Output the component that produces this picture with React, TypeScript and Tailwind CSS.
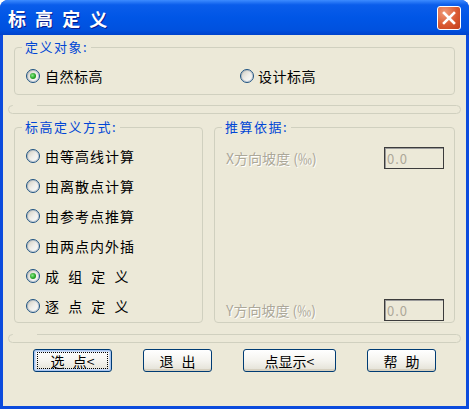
import React from "react";

const cjk = "font-['Noto_Sans_CJK_SC','Noto_Sans',sans-serif]";

function Radio({ checked }: { checked?: boolean }) {
  return (
    <span className="flex h-[14px] w-[14px] shrink-0 items-center justify-center rounded-full border border-[#1C5180] bg-gradient-to-br from-[#CFCBBE] via-[#EEEDE8] to-white shadow-[inset_0_0_0_1px_rgba(120,140,170,0.35)]">
      {checked && (
        <span className="h-[6px] w-[6px] rounded-full bg-[radial-gradient(circle_at_40%_40%,#8BEA8B,#21A121_60%,#148A14)]" />
      )}
    </span>
  );
}

function Option({
  label,
  checked,
  spaced,
}: {
  label: string;
  checked?: boolean;
  spaced?: boolean;
}) {
  return (
    <div className="flex h-[30px] items-center gap-[5px]">
      <Radio checked={checked} />
      <span
        className={
          spaced
            ? "text-[14px] leading-none text-black [word-spacing:6px]"
            : "text-[14px] leading-none tracking-[1px] text-black"
        }
      >
        {label}
      </span>
    </div>
  );
}

function Legend({ text }: { text: string }) {
  return (
    <legend className="ml-[7px] px-[3px] text-[13px] leading-[16px] tracking-[1.5px] text-[#0046D5]">
      {text}
    </legend>
  );
}

function Separator({ className }: { className: string }) {
  return (
    <fieldset className={"h-[9px] rounded-[5px] border border-[#D0D0BF] " + className}>
      <legend className="ml-[4px] h-[1px] w-[24px]" />
    </fieldset>
  );
}

function Slope({ label }: { label: string }) {
  return (
    <div className="flex items-center justify-between">
      <span className="text-[14px] leading-none text-[#ACA899] [text-shadow:1px_1px_0_#ffffff]">
        {label}
      </span>
      <div className="flex h-[22px] w-[60px] items-center border border-[#3C3C3C] bg-[#ECE9D8] pl-[2px] shadow-[inset_1px_1px_0_#9A9A9A]">
        <span className="text-[13px] leading-none tracking-[1px] text-[#ACA899]">0.0</span>
      </div>
    </div>
  );
}

function XpButton({ label, width, focused }: { label: string; width: string; focused?: boolean }) {
  return (
    <button
      className={
        width +
        " flex h-[23px] items-center justify-center rounded-[3px] border border-[#003C74] bg-gradient-to-b from-white via-[#F5F4EF] to-[#E3E1D6] text-[14px] leading-none text-black " +
        (focused ? "shadow-[inset_0_0_0_1px_#A8C4EE,inset_0_0_0_2px_#CBDCF7]" : "shadow-[inset_0_-2px_0_#D6D0C0]")
      }
    >
      {focused ? (
        <span className="flex h-[17px] w-[71px] items-center justify-center border border-dotted border-black [word-spacing:5px]">
          {label}
        </span>
      ) : (
        <span className="[word-spacing:5px]">{label}</span>
      )}
    </button>
  );
}

export default function App() {
  return (
    <div className={"flex h-[409px] w-[469px] flex-col overflow-hidden rounded-t-[8px] bg-[#0B4BDD] " + cjk}>
      <div className="flex h-[35px] shrink-0 items-center justify-between bg-[linear-gradient(to_bottom,#3D8BFF_0%,#0A5DEB_14%,#0056E6_50%,#0051DF_85%,#0043CC_100%)] pl-[8px] pr-[8px]">
        <span className="text-[18px] font-bold leading-none text-white [text-shadow:1px_1px_0_#0A1E8C] [word-spacing:5px]">
          标 高 定 义
        </span>
        <div className="flex h-[24px] w-[24px] items-center justify-center rounded-[3px] border border-white bg-[radial-gradient(circle_at_30%_25%,#F09A78,#DA5A32_55%,#C23E1C)]">
          <svg width="14" height="14" viewBox="0 0 14 14">
            <path d="M2 2 L12 12 M12 2 L2 12" stroke="white" strokeWidth="2.6" strokeLinecap="square" />
          </svg>
        </div>
      </div>

      <div className="mx-[3px] mb-[3px] flex flex-1 flex-col bg-[#ECE9D8] px-[5px] pt-[4px]">
        <fieldset className="mx-[6px] rounded-[4px] border border-[#D0D0BF]">
          <Legend text="定义对象:" />
          <div className="flex h-[39px] items-center pl-[11px] pt-[3px]">
            <div className="flex w-[214px] items-center gap-[5px]">
              <Radio checked />
              <span className="text-[14px] leading-none tracking-[0.5px] text-black">自然标高</span>
            </div>
            <div className="flex items-center gap-[4px]">
              <Radio />
              <span className="text-[14px] leading-none tracking-[0.5px] text-black">设计标高</span>
            </div>
          </div>
        </fieldset>

        <Separator className="mt-[10px]" />

        <div className="mx-[6px] mt-[5px] flex h-[204px] gap-[11px]">
          <fieldset className="w-[189px] rounded-[4px] border border-[#D0D0BF]">
            <Legend text="标高定义方式:" />
            <div className="flex flex-col pl-[11px] pt-[6px]">
              <Option label="由等高线计算" />
              <Option label="由离散点计算" />
              <Option label="由参考点推算" />
              <Option label="由两点内外插" />
              <Option label="成 组 定 义" checked spaced />
              <Option label="逐 点 定 义" spaced />
            </div>
          </fieldset>
          <fieldset className="flex-1 rounded-[4px] border border-[#D0D0BF]">
            <Legend text="推算依据:" />
            <div className="flex h-[187px] flex-col justify-between pb-[1px] pl-[11px] pr-[10px] pt-[12px]">
              <Slope label="X方向坡度 (‰)" />
              <Slope label="Y方向坡度 (‰)" />
            </div>
          </fieldset>
        </div>

        <Separator className="mt-[11px]" />

        <div className="mt-[6px] flex gap-[31px] pl-[25px]">
          <XpButton label="选 点<" width="w-[79px]" focused />
          <XpButton label="退 出" width="w-[69px]" />
          <XpButton label="点显示<" width="w-[93px]" />
          <XpButton label="帮 助" width="w-[69px]" />
        </div>
      </div>
    </div>
  );
}
